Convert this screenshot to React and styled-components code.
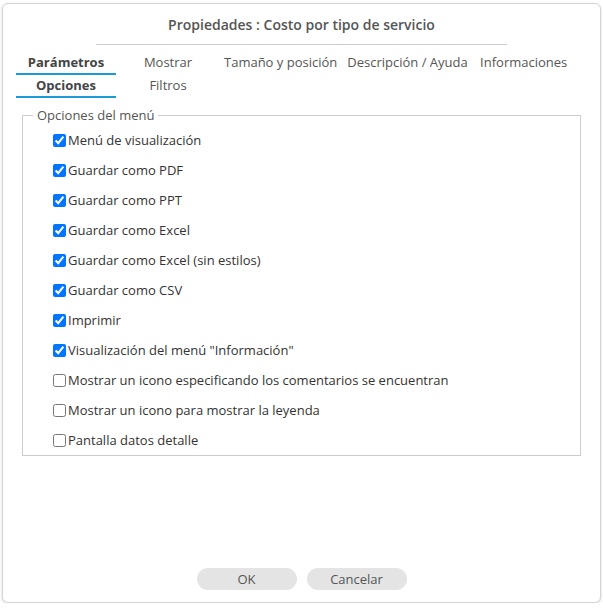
import React from 'react'
import styled, { createGlobalStyle } from 'styled-components';

const Global = createGlobalStyle`
  html, body { margin: 0; padding: 0; background: #fff; }
  body { font-family: "Open Sans", "Noto Sans", sans-serif; }
  * { box-sizing: border-box; }
`;

const tabs = [
  { label: 'Parámetros', active: true },
  { label: 'Mostrar' },
  { label: 'Tamaño y posición' },
  { label: 'Descripción / Ayuda' },
  { label: 'Informaciones' },
  { label: 'Opciones', active: true },
  { label: 'Filtros' },
];

const options = [
  { label: 'Menú de visualización', checked: true },
  { label: 'Guardar como PDF', checked: true },
  { label: 'Guardar como PPT', checked: true },
  { label: 'Guardar como Excel', checked: true },
  { label: 'Guardar como Excel (sin estilos)', checked: true },
  { label: 'Guardar como CSV', checked: true },
  { label: 'Imprimir', checked: true },
  { label: 'Visualización del menú "Información"', checked: true },
  { label: 'Mostrar un icono especificando los comentarios se encuentran', checked: false },
  { label: 'Mostrar un icono para mostrar la leyenda', checked: false },
  { label: 'Pantalla datos detalle', checked: false },
];

const App = () => {
  return (
    <>
      <Global />
      <Dialog>
        <Title>Propiedades : Costo por tipo de servicio</Title>
        <Divider />
        <TabBar>
          {tabs.map((t) => (
            <Tab key={t.label} active={t.active}>{t.label}</Tab>
          ))}
        </TabBar>
        <Group>
          <Legend>Opciones del menú</Legend>
          {options.map((o) => (
            <Option key={o.label}>
              <Check type='checkbox' defaultChecked={o.checked} />
              {o.label}
            </Option>
          ))}
        </Group>
        <Footer>
          <Button>OK</Button>
          <Button>Cancelar</Button>
        </Footer>
      </Dialog>
    </>
  )
}

const Dialog = styled.div`
  margin: 3px 2px 0 2px;
  width: 599px;
  height: 600px;
  border: 1px solid #d4d4d4;
  border-radius: 6px;
  box-shadow: 0 1px 3px rgba(0,0,0,0.15);
  display: flex;
  flex-direction: column;
  background: #fff;
`;

const Title = styled.div`
  text-align: center;
  font-size: 14px;
  font-weight: 600;
  color: #555;
  padding-top: 10px;
  height: 40px;
  line-height: 22px;
`;

const Divider = styled.div`
  width: 411px;
  height: 1px;
  background: #ccc;
  margin: 0 auto;
`;

const TabBar = styled.div`
  display: flex;
  flex-wrap: wrap;
  column-gap: 2px;
  padding: 7px 0 0 13px;
  width: 575px;
`;

const Tab = styled.div`
  min-width: 100px;
  padding: 0 4px;
  height: 23px;
  line-height: 20px;
  text-align: center;
  font-size: 13px;
  color: ${(p) => (p.active ? '#444' : '#555')};
  font-weight: ${(p) => (p.active ? 700 : 400)};
  border-bottom: 2px solid ${(p) => (p.active ? '#1a9ad6' : 'transparent')};
  white-space: nowrap;
`;

const Group = styled.fieldset`
  margin: 8px 19px 0 19px;
  padding: 1px 0 0 30px;
  border: 1px solid #ccc;
  min-width: 0;
`;

const Legend = styled.legend`
  margin-left: -20px;
  padding: 0 4px;
  font-size: 13px;
  color: #555;
  line-height: 18px;
`;

const Option = styled.label`
  display: flex;
  align-items: center;
  height: 30px;
  font-size: 13px;
  color: #333;
`;

const Check = styled.input`
  width: 13px;
  height: 13px;
  margin: 0 2px 0 0;
`;

const Footer = styled.div`
  margin-top: auto;
  display: flex;
  justify-content: center;
  gap: 10px;
  padding-bottom: 12px;
`;

const Button = styled.button`
  width: 100px;
  height: 22px;
  border: none;
  border-radius: 11px;
  background: #e4e4e4;
  color: #555;
  font-family: "Open Sans", "Noto Sans", sans-serif;
  font-size: 13px;
  padding: 0;
`;

export default App;
